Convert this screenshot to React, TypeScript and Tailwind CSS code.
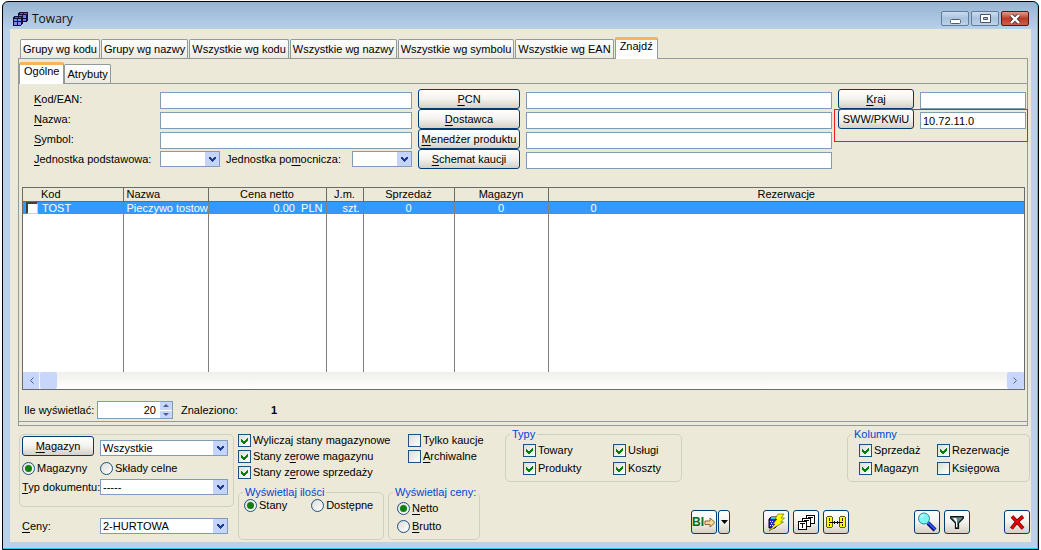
import React from "react";

const INPUT = "h-[17px] min-w-0 w-full border border-[#7f9db9] bg-white px-0.5";
const BUTTON =
  "rounded-[3px] border border-[#003c74] bg-gradient-to-b from-white via-[#f3f2ee] to-[#d6d0c5] text-center whitespace-nowrap";

// Label text with the letter after "&" underlined
const Key = ({ text }: { text: string }) => {
  const i = text.indexOf("&");
  if (i < 0) return <span>{text}</span>;
  return (
    <span>
      {text.slice(0, i)}
      <span className="underline underline-offset-2">{text[i + 1]}</span>
      {text.slice(i + 2)}
    </span>
  );
};

const Select = ({ id, value, label }: { id: string; value: string; label?: string }) => (
  <div className="relative h-4 w-full min-w-0 border border-[#7f9db9] bg-white">
    <select
      id={id}
      aria-label={label}
      className="block h-full w-full appearance-none bg-transparent pr-4 pl-0.5 leading-[14px] outline-none"
    >
      <option>{value}</option>
    </select>
    <span className="pointer-events-none absolute top-0 right-0 flex h-full w-[14px] items-center justify-center bg-[#c5d4fc]">
      <svg width="7" height="5" viewBox="0 0 7 5" shapeRendering="crispEdges">
        <path d="M0 0h2v1h1v1h1v-1h1v-1h2v2h-1v1h-1v1h-1v1h-1v-1h-1v-1h-1v-1h-1z" fill="#1b3c94" />
      </svg>
    </span>
  </div>
);

const Check = ({ text, checked = false }: { text: string; checked?: boolean }) => (
  <label className="flex items-center gap-0.5 whitespace-nowrap">
    <span className="relative h-[13px] w-[13px] shrink-0">
      <input
        type="checkbox"
        defaultChecked={checked}
        className="peer block h-[13px] w-[13px] appearance-none border border-[#1c5180] bg-gradient-to-br from-[#dcdcd7] to-white"
      />
      <svg
        className="pointer-events-none absolute inset-0 hidden peer-checked:block"
        width="13"
        height="13"
        shapeRendering="crispEdges"
      >
        <path d="M3 5v3l2 2h1l4-4v-3l-4 4h-1z" fill="#008000" />
      </svg>
    </span>
    <Key text={text} />
  </label>
);

const Radio = ({ text, name, checked = false }: { text: string; name: string; checked?: boolean }) => (
  <label className="flex items-center gap-0.5 whitespace-nowrap">
    <span className="relative h-[13px] w-[13px] shrink-0">
      <input
        type="radio"
        name={name}
        defaultChecked={checked}
        className="peer block h-[13px] w-[13px] appearance-none rounded-full border border-[#1c5180] bg-gradient-to-br from-[#dcdcd7] to-white"
      />
      <span className="pointer-events-none absolute top-[3px] left-[3px] hidden h-[7px] w-[7px] rounded-full bg-[#118011] peer-checked:block" />
    </span>
    <Key text={text} />
  </label>
);

const Group = ({
  title,
  className,
  children,
}: {
  title: string;
  className: string;
  children: React.ReactNode;
}) => (
  <fieldset className={"min-w-0 rounded-[5px] border border-[#d0d0bf] " + className}>
    <legend className="ml-1 px-0.5 leading-[14px] text-[#0046d5]">{title}</legend>
    {children}
  </fieldset>
);

const AppIcon = () => (
  <svg width="15" height="14" viewBox="0 0 15 14" shapeRendering="crispEdges">
    <path d="M5 1l1-1h9v8l-2 2H5z" fill="#10103a" />
    <path d="M7 1h3v1H7zM11 1h3v1h-3z" fill="#0a9a80" />
    <path d="M6 3h3v3H6zM10 3h3v3h-3zM10 7h3v2h-3z" fill="#7474f0" />
    <path d="M0 5l2-1h8v7l-2 3H0z" fill="#10103a" />
    <path d="M2 5h3v1H2zM6 5h2v1H6z" fill="#0a9a80" />
    <path d="M1 7h3v2H1zM5 7h3v2H5zM1 10h3v3H1zM5 10h3v3H5z" fill="#8484ff" />
  </svg>
);

const BiIcon = () => (
  <svg width="12" height="11" viewBox="0 0 12 11">
    <path d="M1 4h5V1l5 4.500-5 4.500V7.500H1z" fill="#f6d7a0" stroke="#96652c" />
  </svg>
);

const LightningIcon = () => (
  <svg width="19" height="19" viewBox="0 0 19 19">
    <path d="M2 6l2-2h6v9l-2 2H2z" fill="#2424c4" stroke="#000" />
    <path d="M4 5h5" stroke="#27d4e4" strokeWidth="2" />
    <path d="M3 8h1v1h-1zM5 8h1v1h-1zM4 10h1v1h-1zM6 10h1v1h-1zM3 12h1v1h-1zM5 12h1v1h-1z" fill="#fff" />
    <path d="M11 1h6l-3 4h3.500l-4 4h3L2 18l6-7H6l4-5H8z" fill="#ffff00" stroke="#333300" strokeWidth=".5" />
  </svg>
);

const STACK = [
  [8, 0],
  [4, 3],
  [0, 6],
];

const TextStackIcon = () => (
  <svg width="17" height="15" viewBox="0 0 17 15" shapeRendering="crispEdges">
    {STACK.map(([x, y]) => (
      <g key={x} transform={`translate(${x} ${y})`} fill="none" stroke="#000">
        <path d="M.5.5h8v8h-8z" fill="#fff" />
        <path d="M2 2.500h5M4.500 2.500v4" />
      </g>
    ))}
  </svg>
);

const LinkIcon = () => (
  <svg width="20" height="13" viewBox="0 0 20 13" shapeRendering="crispEdges">
    <path d="M1 0h5v1h1v10H6v1H1v-1H0V1h1zM14 0h5v1h1v10h-1v1h-5v-1h-1V1h1z" fill="#5a5a00" />
    <path d="M1 1h5v10H1zM14 1h5v10h-5z" fill="#ffff00" />
    <path d="M3 2h1v3H3zM3 8h1v2H3zM16 2h1v3h-1zM16 8h1v2h-1z" fill="#222" />
    <path d="M3 6.500h5M9 6.500h2M12 6.500h5M8.500 5v3M11.500 5v3" stroke="#000" fill="none" />
  </svg>
);

const SearchIcon = () => (
  <svg width="20" height="20" viewBox="0 0 20 20">
    <path d="M11 11l7 7" stroke="#000060" strokeWidth="4" />
    <path d="M11 10.500l7 7" stroke="#2a5cff" strokeWidth="2" />
    <circle cx="7" cy="6.500" r="5.500" fill="#7df4f4" stroke="#2d8c92" />
    <path d="M4 6a3 3 0 0 1 3-3" stroke="#fff" fill="none" />
  </svg>
);

const FilterIcon = () => (
  <svg width="14" height="13" viewBox="0 0 14 13">
    <path d="M.7.7h12.600v1.500L8.500 7v5.300h-3V7L.7 2.200z" fill="#5f8a86" stroke="#111" strokeWidth="1.200" />
    <path d="M3 2h3l1 2v7H6V6z" fill="#fff" />
  </svg>
);

const CrossIcon = () => (
  <svg width="15" height="15" viewBox="0 0 15 15">
    <path d="M2 1.500q4 4 11 12M13 1.500Q7 6 1.500 13.500" stroke="#4a0000" strokeWidth="3.600" fill="none" />
    <path d="M2 1.500q4 4 11 12M13 1.500Q7 6 1.500 13.500" stroke="#f00000" strokeWidth="2.400" fill="none" />
  </svg>
);

const ToolButton = ({ label, children }: { label: string; children: React.ReactNode }) => (
  <button aria-label={label} className={BUTTON + " flex h-6 w-[26px] items-center justify-center"}>
    {children}
  </button>
);

const WINDOW_BUTTON =
  "flex h-[15px] w-7 items-center justify-center rounded-[2px] border border-[#5f7c9b] bg-gradient-to-b from-[#cbdcee] via-[#a9c3de] to-[#bdd3ea]";

const TitleBar = () => (
  <div className="flex h-[27px] items-center gap-1 pt-1.5 pr-0.5 pl-[3px]">
    <div className="flex grow items-center gap-1">
      <AppIcon />
      <h1 className="font-['Open_Sans',sans-serif] text-[12px] text-[#111]">Towary</h1>
    </div>
    <div className="flex gap-0.5">
      <button aria-label="Minimalizuj" className={WINDOW_BUTTON}>
        <svg width="11" height="12">
          <rect x=".5" y="6.500" width="10" height="4" rx="1" fill="#fff" stroke="#555c66" />
        </svg>
      </button>
      <button aria-label="Maksymalizuj" className={WINDOW_BUTTON}>
        <svg width="11" height="10">
          <path d="M.5.5h10v8H.5zM3.500 3.500v2h4v-2z" fill="#fff" stroke="#4d5562" fillRule="evenodd" />
        </svg>
      </button>
      <button
        aria-label="Zamknij"
        className="flex h-[15px] w-7 items-center justify-center rounded-[2px] border border-[#5a1414] bg-gradient-to-b from-[#dc9a8c] via-[#bb3a26] to-[#c9604c]"
      >
        <svg width="12" height="10" viewBox="0 0 12 10">
          <path d="M2 1l8 8M10 1L2 9" stroke="#4a3038" strokeWidth="4" />
          <path d="M2 1l8 8M10 1L2 9" stroke="#fff" strokeWidth="2.400" />
        </svg>
      </button>
    </div>
  </div>
);

const tabs = [
  "Grupy wg kodu",
  "Grupy wg nazwy",
  "Wszystkie wg kodu",
  "Wszystkie wg nazwy",
  "Wszystkie wg symbolu",
  "Wszystkie wg EAN",
];

const TAB =
  "h-[19px] rounded-t-[2px] border border-b-0 border-[#919b9c] bg-gradient-to-b from-white to-[#eceae0] px-0.5 whitespace-nowrap";
const ACTIVE_TAB =
  "relative -mb-px rounded-t-[2px] border border-t-[3px] border-b-0 border-[#919b9c] border-t-[#f9b35c] bg-white px-1 pb-1.5 whitespace-nowrap";

const SearchForm = () => (
  <div className="flex gap-1.5 pt-[5px] pr-px pl-[15px]">
    <div className="grid min-w-0 grow auto-rows-[20px] grid-cols-[120px_252px_102px_minmax(0,1fr)] items-center gap-x-1.5">
      <label htmlFor="kod"><Key text="&Kod/EAN:" /></label>
      <input id="kod" className={INPUT + " self-end"} />
      <button className={BUTTON + " h-full"}><Key text="&PCN" /></button>
      <input aria-label="PCN" className={INPUT + " self-end"} />

      <label htmlFor="nazwa"><Key text="&Nazwa:" /></label>
      <input id="nazwa" className={INPUT + " self-end"} />
      <button className={BUTTON + " h-full"}><Key text="&Dostawca" /></button>
      <input aria-label="Dostawca" className={INPUT + " self-end"} />

      <label htmlFor="symbol"><Key text="&Symbol:" /></label>
      <input id="symbol" className={INPUT + " self-end"} />
      <button className={BUTTON + " h-full"}><Key text="&Menedżer produktu" /></button>
      <input aria-label="Menedżer produktu" className={INPUT + " self-end"} />

      <label htmlFor="jp" className="whitespace-nowrap"><Key text="&Jednostka podstawowa:" /></label>
      <div className="grid grid-cols-[60px_120px_60px] items-center gap-x-1.5">
        <Select id="jp" value="" />
        <label htmlFor="jpom" className="whitespace-nowrap"><Key text="Jednostka po&mocnicza:" /></label>
        <Select id="jpom" value="" />
      </div>
      <button className={BUTTON + " h-full"}><Key text="&Schemat kaucji" /></button>
      <input aria-label="Schemat kaucji" className={INPUT + " self-end"} />
    </div>
    <div className="relative grid shrink-0 auto-rows-[20px] grid-cols-[76px_106px] items-center gap-x-1.5">
      <button className={BUTTON + " h-full"}><Key text="&Kraj" /></button>
      <input aria-label="Kraj" className={INPUT + " self-end"} />
      <button className={BUTTON + " h-full"}>SWW/PKWiU</button>
      <input aria-label="SWW/PKWiU" defaultValue="10.72.11.0" className={INPUT + " self-end"} />
      <div className="pointer-events-none absolute top-5 -right-0.5 -left-1 h-[33px] border border-[#ed1c24]" />
    </div>
  </div>
);

const columns = ["Kod", "Nazwa", "Cena netto", "J.m.", "Sprzedaż", "Magazyn", "Rezerwacje"];

const ResultTable = () => (
  <div className="mr-0.5 ml-[3px] border border-[#6b6b6b] bg-white">
    <table className="w-full table-fixed border-collapse leading-3">
      <colgroup>
        <col className="w-[100px]" />
        <col className="w-[85px]" />
        <col className="w-[118px]" />
        <col className="w-[37px]" />
        <col className="w-[91px]" />
        <col className="w-[94px]" />
        <col />
      </colgroup>
      <thead>
        <tr className="h-[13px] bg-[#ece9d8]">
          {columns.map((name, i) => (
            <th
              key={name}
              className={
                "border-r border-b border-[#6b6b6b] p-0 font-normal last:border-r-0 " +
                (i === 0 ? "pl-[18px] text-left" : i === 1 ? "pl-[3px] text-left" : "text-center")
              }
            >
              {name}
            </th>
          ))}
        </tr>
      </thead>
      <tbody>
        <tr className="h-[13px] bg-[#3399ff] text-white">
          <td className="border-r border-[#808080] p-0">
            <div className="flex items-center gap-1 pl-[3px]">
              <input
                type="checkbox"
                aria-label="TOST"
                className="block h-3 w-3 appearance-none border border-t-2 border-l-2 border-[#d4d0c8] border-t-[#404040] border-l-[#404040] bg-white"
              />
              TOST
            </div>
          </td>
          <td className="overflow-hidden border-r border-[#808080] p-0 pl-[3px] whitespace-nowrap">Pieczywo tostowe</td>
          <td className="border-r border-[#808080] p-0 pr-[3px] text-right whitespace-pre">0.00  PLN</td>
          <td className="border-r border-[#808080] p-0 pr-[3px] text-right">szt.</td>
          <td className="border-r border-[#808080] p-0 text-center">0</td>
          <td className="border-r border-[#808080] p-0 text-center">0</td>
          <td className="p-0 pl-[42px]">0</td>
        </tr>
        <tr className="h-[158px]">
          {columns.map((name) => (
            <td key={name} className="border-r border-[#808080] p-0 last:border-r-0" />
          ))}
        </tr>
      </tbody>
    </table>
    <div className="flex h-[17px] bg-gradient-to-b from-[#f0efe9] to-white">
      <button aria-label="W lewo" className="flex w-4 items-center justify-center bg-[#c8d6fb]">
        <svg width="5" height="7"><path d="M4.500.5l-3 3 3 3" fill="none" stroke="#4d6185" /></svg>
      </button>
      <div className="ml-px w-[17px] rounded-[2px] bg-[#c8d6fb]" />
      <button aria-label="W prawo" className="ml-auto flex w-[17px] items-center justify-center rounded-[2px] bg-[#c8d6fb]">
        <svg width="5" height="7"><path d="M.5.5l3 3-3 3" fill="none" stroke="#4d6185" /></svg>
      </button>
    </div>
  </div>
);

const ResultCount = () => (
  <div className="flex items-center gap-2 pt-[11px] pb-0.5 pl-[5px]">
    <label htmlFor="ile" className="w-[65px] whitespace-nowrap">Ile wyświetlać:</label>
    <div className="flex h-[18px] w-[76px] border border-[#7f9db9] bg-white">
      <input id="ile" defaultValue="20" className="w-0 grow pr-1 text-right outline-none" />
      <div className="flex w-3 flex-col gap-px">
        <button aria-label="Więcej" className="flex grow items-center justify-center bg-[#c8d6fb]">
          <svg width="6" height="3"><path d="M0 3l3-3 3 3z" fill="#4d6185" /></svg>
        </button>
        <button aria-label="Mniej" className="flex grow items-center justify-center bg-[#c8d6fb]">
          <svg width="6" height="3"><path d="M0 0l3 3 3-3z" fill="#4d6185" /></svg>
        </button>
      </div>
    </div>
    <span className="w-[82px]">Znaleziono:</span>
    <b>1</b>
  </div>
);

const WarehouseOptions = () => (
  <div className="ml-px w-[215px] shrink-0 pt-2">
    <div className="rounded-[5px] border border-[#d0d0bf] px-0.5 pt-px pb-[11px]">
      <div className="grid grid-cols-[72px_128px] items-center gap-x-1.5">
        <button className={BUTTON + " h-5"}><Key text="&Magazyn" /></button>
        <div className="pt-1">
          <Select id="magazyn" label="Magazyn" value="Wszystkie" />
        </div>
      </div>
      <div className="grid grid-cols-[72px_128px] items-center gap-x-1.5 pt-1.5 pb-1">
        <Radio name="miejsce" text="Magazyny" checked />
        <Radio name="miejsce" text="Składy celne" />
      </div>
      <div className="grid grid-cols-[72px_128px] items-center gap-x-1.5">
        <label htmlFor="typ" className="whitespace-nowrap"><Key text="&Typ dokumentu:" /></label>
        <Select id="typ" value="-----" />
      </div>
    </div>
    <div className="grid grid-cols-[72px_128px] items-center gap-x-1.5 pt-[11px] pl-[3px]">
      <label htmlFor="ceny"><Key text="&Ceny:" /></label>
      <Select id="ceny" value="2-HURTOWA" />
    </div>
  </div>
);

const DisplayOptions = () => (
  <div className="w-[242px] shrink-0 pt-2">
    <div className="grid grid-cols-[170px_1fr]">
      <div className="flex flex-col gap-[3px]">
        <Check text="Wyliczaj stany magazynowe" checked />
        <Check text="Stany z&erowe magazynu" checked />
        <Check text="Stany z&erowe sprzedaży" checked />
      </div>
      <div className="flex flex-col gap-[3px]">
        <Check text="Tylko kaucje" />
        <Check text="&Archiwalne" />
      </div>
    </div>
    <div className="flex gap-1 pt-1.5">
      <Group title="Wyświetlaj ilości" className="w-[146px]">
        <div className="flex gap-6 pl-[5px]">
          <Radio name="ilosci" text="Stany" checked />
          <Radio name="ilosci" text="Dostępne" />
        </div>
      </Group>
      <Group title="Wyświetlaj ceny:" className="w-[92px]">
        <div className="flex flex-col gap-[5px] pt-[3px] pb-1.5 pl-2">
          <Radio name="ceny" text="&Netto" checked />
          <Radio name="ceny" text="&Brutto" />
        </div>
      </Group>
    </div>
  </div>
);

const Toolbar = () => (
  <div className="mt-auto flex pb-1.5 pl-[186px]">
    <button className={BUTTON + " flex h-6 w-[26px] items-center justify-center text-[12px] font-bold text-[#0a6a14]"}>
      BI
      <BiIcon />
    </button>
    <button aria-label="Więcej" className={BUTTON + " ml-px flex h-6 w-3 items-center justify-center"}>
      <svg width="7" height="4"><path d="M0 0h7l-3.500 4z" fill="#000" /></svg>
    </button>
    <div className="flex gap-1 pl-[33px]">
      <ToolButton label="Szybka edycja"><LightningIcon /></ToolButton>
      <ToolButton label="Opisy"><TextStackIcon /></ToolButton>
      <ToolButton label="Powiązania"><LinkIcon /></ToolButton>
    </div>
    <div className="ml-auto flex gap-1">
      <ToolButton label="Szukaj"><SearchIcon /></ToolButton>
      <ToolButton label="Filtr"><FilterIcon /></ToolButton>
    </div>
    <div className="pl-[34px]">
      <ToolButton label="Zamknij okno"><CrossIcon /></ToolButton>
    </div>
  </div>
);

const App = () => {
  return (
    <div className="min-h-screen bg-white pt-px pr-0.5 pb-0.5 pl-0.5 font-['Liberation_Sans',Arial,sans-serif] text-[11px] leading-[13px] text-black">
      <div className="rounded-t-md border border-black bg-[#b9d1ea] bg-gradient-to-b from-[#97b4d2] via-[#b9d1ea] via-[28px] to-[#b9d1ea]">
        <div className="rounded-t-md border-r border-b border-[#22d3e6] pr-1.5 pb-1.5 pl-[7px]">
          <TitleBar />
          <div className="bg-[#ece9d8] pt-2 pr-px pb-0.5 pl-2">
            <div className="flex items-end gap-px pl-0.5">
              {tabs.map((tab) => (
                <button key={tab} className={TAB}>{tab}</button>
              ))}
              <button className={ACTIVE_TAB}>Znajdź</button>
            </div>
            <div className="mr-0.5 border border-[#919b9c] pb-[3px]">
              <div className="flex items-end pt-[3px]">
                <button className={ACTIVE_TAB}>Ogólne</button>
                <button className={TAB}>Atrybuty</button>
              </div>
              <div className="border-y border-[#919b9c]">
                <SearchForm />
                <div className="pt-[18px]">
                  <ResultTable />
                </div>
                <ResultCount />
              </div>
            </div>
            <div className="flex gap-1">
              <WarehouseOptions />
              <DisplayOptions />
              <div className="flex grow flex-col pt-px pl-[21px]">
                <div className="flex justify-between">
                  <Group title="Typy" className="w-[177px]">
                    <div className="grid grid-cols-[90px_1fr] gap-y-[5px] pt-[3px] pb-1.5 pl-[17px]">
                      <Check text="Towary" checked />
                      <Check text="Usługi" checked />
                      <Check text="Produkty" checked />
                      <Check text="Koszty" checked />
                    </div>
                  </Group>
                  <Group title="Kolumny" className="w-[183px]">
                    <div className="grid grid-cols-[78px_1fr] gap-y-[5px] pt-[3px] pb-1.5 pl-[11px]">
                      <Check text="Sprzedaż" checked />
                      <Check text="Rezerwacje" checked />
                      <Check text="Magazyn" checked />
                      <Check text="Księgowa" />
                    </div>
                  </Group>
                </div>
                <Toolbar />
              </div>
            </div>
          </div>
        </div>
      </div>
    </div>
  );
};

export default App;
